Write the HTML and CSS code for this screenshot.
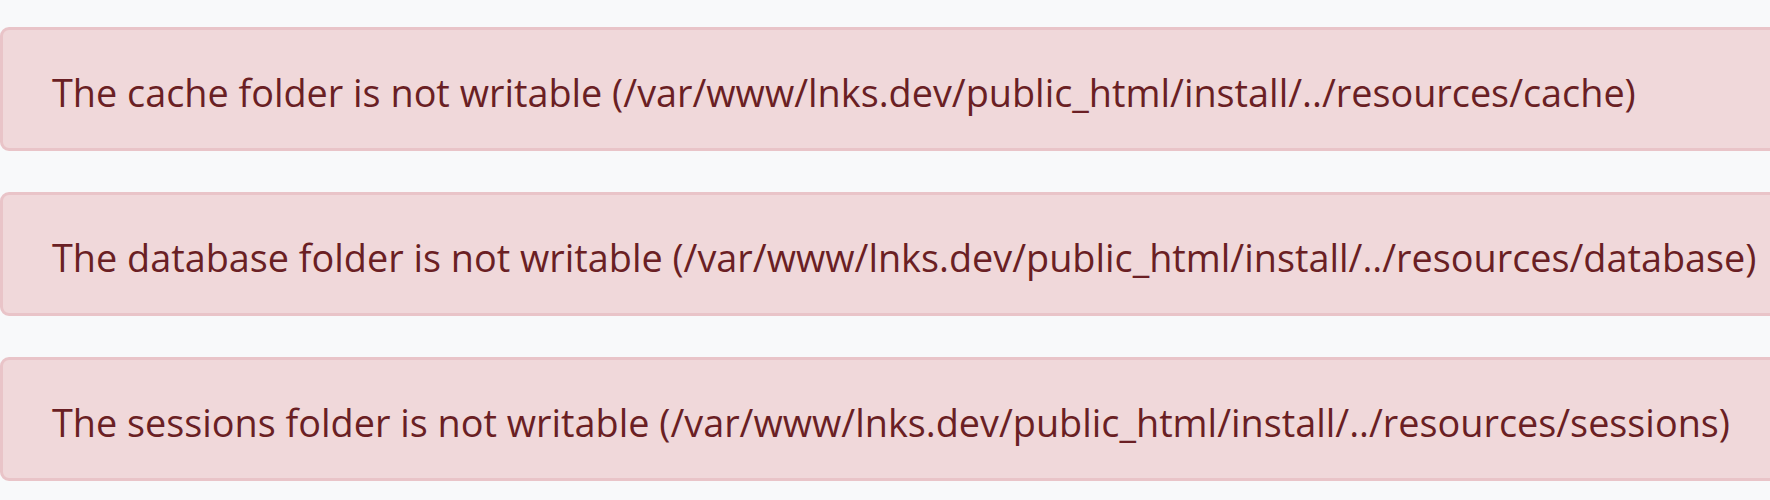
FILE: index.html
```html
<!DOCTYPE html>
<html lang="en">
<head>
<meta charset="utf-8">
<title>Install</title>
<link rel="stylesheet" href="styles.css">
</head>
<body>
<div class="alerts">
  <div class="alert">The cache folder is not writable (/var/www/lnks.dev/public_html/install/../resources/cache)</div>
  <div class="alert">The database folder is not writable (/var/www/lnks.dev/public_html/install/../resources/database)</div>
  <div class="alert">The sessions folder is not writable (/var/www/lnks.dev/public_html/install/../resources/sessions)</div>
</div>
</body>
</html>
```
FILE: styles.css
```css
html, body {
  margin: 0;
  padding: 0;
  background: #f8f9fa;
  overflow: hidden;
}
.alerts {
  padding-top: 27px;
  margin-right: -40px;
  display: flex;
  flex-direction: column;
  gap: 41px;
}
.alert {
  font-family: "Open Sans", "Noto Sans", sans-serif;
  font-size: 37.8px;
  line-height: 60px;
  color: #6a1f24;
  background: #f0d8da;
  border: 3px solid #e9c4c8;
  border-radius: 9px;
  padding: 33px 49px 25px;
  white-space: nowrap;
}
```
